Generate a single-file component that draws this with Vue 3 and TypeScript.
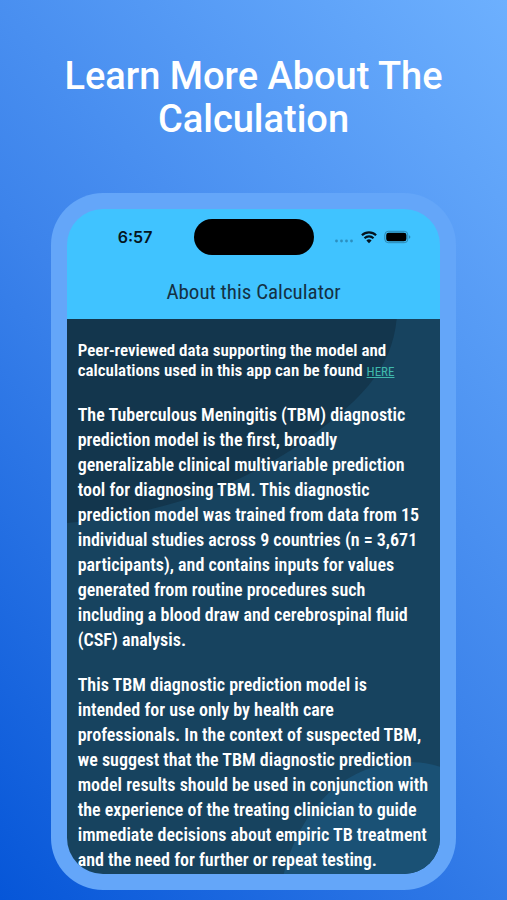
<script setup lang="ts">
const intro: string[] = [
  'Peer-reviewed data supporting the model and',
  'calculations used in this app can be found',
]

const paragraphs: string[][] = [
  [
    'The Tuberculous Meningitis (TBM) diagnostic',
    'prediction model is the first, broadly',
    'generalizable clinical multivariable prediction',
    'tool for diagnosing TBM. This diagnostic',
    'prediction model was trained from data from 15',
    'individual studies across 9 countries (n = 3,671',
    'participants), and contains inputs for values',
    'generated from routine procedures such',
    'including a blood draw and cerebrospinal fluid',
    '(CSF) analysis.',
  ],
  [
    'This TBM diagnostic prediction model is',
    'intended for use only by health care',
    'professionals. In the context of suspected TBM,',
    'we suggest that the TBM diagnostic prediction',
    'model results should be used in conjunction with',
    'the experience of the treating clinician to guide',
    'immediate decisions about empiric TB treatment',
    'and the need for further or repeat testing.',
  ],
]
</script>

<template>
  <main class="page">
    <h1 class="headline">Learn More About The Calculation</h1>
    <section class="phone">
      <div class="screen">
        <header class="top">
          <div class="status">
            <span class="time">6:57</span>
            <span class="island"></span>
            <span class="indicators">
              <svg class="dots" width="20" height="14" viewBox="0 0 20 14" aria-hidden="true">
                <g fill="#2b8fc0">
                  <circle cx="2.5" cy="11" r="1.4" />
                  <circle cx="7.5" cy="11" r="1.4" />
                  <circle cx="12.5" cy="11" r="1.4" />
                  <circle cx="17.5" cy="11" r="1.4" />
                </g>
              </svg>
              <svg width="16" height="14" viewBox="0 0 16 14" aria-hidden="true">
                <g fill="none" stroke="#051520" stroke-width="2.2">
                  <path d="M0.9 5.2A10.2 10.2 0 0 1 15.1 5.2" />
                  <path d="M3.5 8.2A6.4 6.4 0 0 1 12.5 8.2" />
                </g>
                <path d="M8 13.2L5.4 10.6A3.7 3.7 0 0 1 10.6 10.6Z" fill="#051520" />
              </svg>
              <svg width="27" height="14" viewBox="0 0 27 14" aria-hidden="true">
                <rect x="0.8" y="1.3" width="23" height="11.4" rx="3.6" fill="none" stroke="#2b87b3" stroke-width="1" />
                <rect x="2.2" y="2.7" width="20.2" height="8.6" rx="2.4" fill="#000" />
                <path d="M25 5.2V8.8Q26.4 8.2 26.4 7T25 5.2Z" fill="#2b87b3" />
              </svg>
            </span>
          </div>
          <h2 class="title">About this Calculator</h2>
        </header>
        <article class="content">
          <svg class="backdrop" viewBox="0 0 374 555" preserveAspectRatio="none" aria-hidden="true">
            <path d="M0 0H330C325 50 295 83 226 130C160 172 95 194 0 204Z" fill="#13364d" />
            <path d="M217 555C230 500 270 443 343 443Q360 443 374 448V555Z" fill="#1a5175" />
          </svg>
          <p class="intro">
            <template v-for="(line, i) in intro" :key="i">{{ line }}<br v-if="i < intro.length - 1"></template>
            {{ ' ' }}<a class="link" href="#">HERE</a>
          </p>
          <p v-for="(lines, p) in paragraphs" :key="p" class="body">
            <template v-for="(line, i) in lines" :key="i">{{ line }}<br v-if="i < lines.length - 1"></template>
          </p>
        </article>
      </div>
    </section>
  </main>
</template>

<style>
body {
  margin: 0;
}
</style>

<style scoped>
.page {
  box-sizing: border-box;
  min-height: 100vh;
  padding: 55px 10% 10px;
  background: linear-gradient(48deg, #0656d8 0%, #3c83eb 47%, #6db0fe 100%);
  font-family: Roboto, "Liberation Sans", sans-serif;
}

.headline {
  margin: 0 0 52px;
  color: #fff;
  font-size: 38px;
  font-weight: 500;
  line-height: 43px;
  text-align: center;
}

.phone {
  padding: 16px;
  border-radius: 52px;
  background: #64a6f9;
}

.screen {
  overflow: hidden;
  border-radius: 36px;
}

.top {
  padding: 10px 0 14px;
  background: #40c3ff;
}

.status {
  display: grid;
  grid-template-columns: 1fr 120px 1fr;
  align-items: center;
}

.time {
  padding-left: 10px;
  color: #051520;
  font-family: Inter, sans-serif;
  font-size: 16px;
  font-weight: 600;
  text-align: center;
}

.island {
  height: 36px;
  border-radius: 18px;
  background: #000;
}

.indicators {
  display: flex;
  align-items: center;
  justify-content: center;
  gap: 7px;
  padding-right: 9px;
}

.title {
  margin: 24px 0 0;
  color: #143144;
  font-family: "Roboto Condensed", Roboto, sans-serif;
  font-size: 21px;
  font-weight: 400;
  line-height: 26px;
  text-align: center;
}

.content {
  position: relative;
  padding: 21px 11px 2px;
  background: #17435f;
  color: #fff;
  font-family: "Roboto Condensed", Roboto, sans-serif;
  font-weight: 600;
  white-space: nowrap;
}

.backdrop {
  position: absolute;
  inset: 0;
  width: 100%;
  height: 100%;
}

.intro,
.body {
  position: relative;
  margin: 0;
}

.intro {
  font-size: 17px;
  line-height: 20px;
}

.link {
  color: #3fb8ac;
  font-size: 13px;
  font-weight: 400;
}

.body {
  margin-top: 20px;
  font-size: 18px;
  line-height: 25px;
}
</style>
